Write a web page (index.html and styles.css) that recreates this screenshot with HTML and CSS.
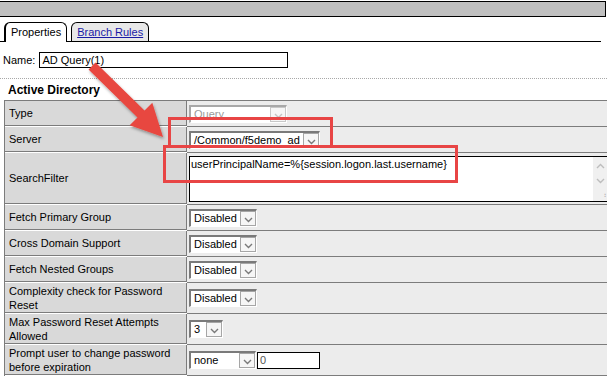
FILE: index.html
```html
<!DOCTYPE html>
<html>
<head>
  <title>AD Query Properties</title>
  <link rel="stylesheet" href="styles.css">
</head>
<body>
  <div class="topbar"></div>

  <div class="tabs">
    <div class="tab active">Properties</div>
    <div class="tab"><a href="#">Branch Rules</a></div>
  </div>

  <div class="name-row">
    <label>Name:</label>
    <div class="textbox name-box">AD Query(1)</div>
  </div>

  <div class="sep"></div>
  <h3 class="section">Active Directory</h3>

  <div class="props">
    <div class="lbl">Type</div>
    <div class="val">
      <span class="sel disabled w-query"><span class="sel-text">Query</span><span class="sel-btn"><svg width="9" height="6" viewBox="0 0 9 6"><path d="M1 1l3.5 3.5L8 1" fill="none" stroke="currentColor" stroke-width="1.4"/></svg></span></span>
    </div>

    <div class="lbl">Server</div>
    <div class="val">
      <span class="sel w-server"><span class="sel-text">/Common/f5demo_ad</span><span class="sel-btn"><svg width="9" height="6" viewBox="0 0 9 6"><path d="M1 1l3.5 3.5L8 1" fill="none" stroke="currentColor" stroke-width="1.4"/></svg></span></span>
    </div>

    <div class="lbl tall">SearchFilter</div>
    <div class="val tall top">
      <div class="area">
        <span class="area-text">userPrincipalName=%{session.logon.last.username}</span>
        <div class="scroll">
          <svg width="9" height="6" viewBox="0 0 9 6"><path d="M1 5l3.5-3.5L8 5" fill="none" stroke="currentColor" stroke-width="1.4"/></svg>
          <svg width="9" height="6" viewBox="0 0 9 6"><path d="M1 1l3.5 3.5L8 1" fill="none" stroke="currentColor" stroke-width="1.4"/></svg>
          <span class="grip">⠰</span>
        </div>
      </div>
    </div>

    <div class="lbl">Fetch Primary Group</div>
    <div class="val">
      <span class="sel w-dis"><span class="sel-text">Disabled</span><span class="sel-btn"><svg width="9" height="6" viewBox="0 0 9 6"><path d="M1 1l3.5 3.5L8 1" fill="none" stroke="currentColor" stroke-width="1.4"/></svg></span></span>
    </div>

    <div class="lbl">Cross Domain Support</div>
    <div class="val">
      <span class="sel w-dis"><span class="sel-text">Disabled</span><span class="sel-btn"><svg width="9" height="6" viewBox="0 0 9 6"><path d="M1 1l3.5 3.5L8 1" fill="none" stroke="currentColor" stroke-width="1.4"/></svg></span></span>
    </div>

    <div class="lbl">Fetch Nested Groups</div>
    <div class="val">
      <span class="sel w-dis"><span class="sel-text">Disabled</span><span class="sel-btn"><svg width="9" height="6" viewBox="0 0 9 6"><path d="M1 1l3.5 3.5L8 1" fill="none" stroke="currentColor" stroke-width="1.4"/></svg></span></span>
    </div>

    <div class="lbl two">Complexity check for Password<br>Reset</div>
    <div class="val two">
      <span class="sel w-dis"><span class="sel-text">Disabled</span><span class="sel-btn"><svg width="9" height="6" viewBox="0 0 9 6"><path d="M1 1l3.5 3.5L8 1" fill="none" stroke="currentColor" stroke-width="1.4"/></svg></span></span>
    </div>

    <div class="lbl two">Max Password Reset Attempts<br>Allowed</div>
    <div class="val two">
      <span class="sel w-num"><span class="sel-text">3</span><span class="sel-btn"><svg width="9" height="6" viewBox="0 0 9 6"><path d="M1 1l3.5 3.5L8 1" fill="none" stroke="currentColor" stroke-width="1.4"/></svg></span></span>
    </div>

    <div class="lbl two">Prompt user to change password<br>before expiration</div>
    <div class="val two">
      <span class="sel w-none"><span class="sel-text">none</span><span class="sel-btn"><svg width="9" height="6" viewBox="0 0 9 6"><path d="M1 1l3.5 3.5L8 1" fill="none" stroke="currentColor" stroke-width="1.4"/></svg></span></span>
      <span class="textbox days">0</span>
    </div>
  </div>

  <!-- annotations drawn over the screenshot -->
  <div class="callout server-box"></div>
  <div class="callout filter-box"></div>
  <svg class="arrow" width="180" height="150" viewBox="0 0 180 150">
    <defs>
      <filter id="shadow" x="-20%" y="-20%" width="140%" height="140%">
        <feDropShadow dx="1" dy="2" stdDeviation="1.5" flood-color="#000" flood-opacity="0.35"/>
      </filter>
    </defs>
    <polygon filter="url(#shadow)" fill="#e8473f"
      points="95.5,62.5 144.5,110.5 152.3,102.7 163,137 129.7,125.3 137.5,117.5 88.5,69.5"/>
  </svg>
</body>
</html>
```

FILE: styles.css
```css
body {
  margin: 0;
  width: 607px;
  height: 386px;
  overflow: hidden;
  position: relative;
  background: #fff;
  color: #000;
  font-family: 'Liberation Sans', Arial, sans-serif;
  font-size: 11px;
}

.topbar {
  margin-top: 1px;
  width: 606px;
  height: 16px;
  box-sizing: border-box;
  background: #c0c0c0;
  border: 1px solid #000;
  border-left: none;
}

.tabs {
  display: flex;
  gap: 4px;
  margin-top: 5px;
  padding-left: 4px;
  width: 597px;
  border-bottom: 1px solid #000;
}
.tab {
  height: 18px;
  line-height: 19px;
  padding: 0 5px;
  margin-bottom: -1px;
  border: 1px solid #000;
  border-bottom: none;
  border-radius: 6px 6px 0 0;
  background: #e8e8e8;
  font-size: 11px;
}
.tab.active {
  background: #fff;
  height: 19px;
  border-left-width: 2px;
}
.tab a { color: #1a1aa6; }

.name-row {
  display: flex;
  align-items: center;
  padding: 10px 3px 0;
  font-size: 11px;
}
.textbox {
  box-sizing: border-box;
  border: 1px solid #000;
  background: #fff;
  padding-left: 2px;
}
.name-box {
  margin-left: 4px;
  width: 249px;
  height: 16px;
  line-height: 14px;
}

.sep {
  margin-top: 10px;
  border-top: 1px dotted #a8a8a8;
}
.section {
  margin: 0;
  padding: 4px 8px 2px;
  font-size: 12px;
  line-height: 15px;
}

.props {
  display: grid;
  grid-template-columns: 182px 1fr;
  margin-left: 4px;
  width: 615px;
  border-top: 1px solid #7c7c7c;
  border-left: 1px solid #7c7c7c;
}
.lbl, .val {
  height: 25px;
  border-bottom: 1px solid #7c7c7c;
  display: flex;
  align-items: center;
}
.lbl {
  box-sizing: border-box;
  padding-left: 4px;
  background: #d9d9d9;
  border-right: 1px solid #7c7c7c;
  line-height: 14px;
}
.val {
  padding-left: 2px;
  background: #ececec;
  gap: 1px;
}
.tall { height: 51px; }
.two { height: 30px; }
.val.top { align-items: flex-start; }

.sel {
  display: inline-flex;
  box-sizing: border-box;
  height: 18px;
  background: #fff;
  border-style: solid;
  border-width: 2px 1px 1px 2px;
  border-color: #7a7a7a #fff #fff #7a7a7a;
}
.sel-text {
  flex: 1;
  padding-left: 3px;
  line-height: 15px;
  white-space: nowrap;
  overflow: hidden;
}
.sel-btn {
  width: 16px;
  flex: none;
  box-sizing: border-box;
  border: 1px solid #a6a6a6;
  background: #f6f6f6;
  color: #7a7a7a;
  display: flex;
  align-items: flex-end;
  justify-content: center;
  padding-bottom: 2px;
}
.sel.disabled {
  border-color: #a8a8a8 #fff #fff #a8a8a8;
}
.sel.disabled .sel-text { color: #9a9a9a; }
.sel.disabled .sel-btn { color: #c4c4c4; border-color: #c8c8c8; }

.w-query { width: 98px; }
.w-server { width: 131px; }
.w-dis { width: 68px; }
.w-num { width: 34px; }
.w-none { width: 67px; }

.days {
  width: 63px;
  height: 17px;
  line-height: 15px;
  color: #555;
}

.area {
  display: flex;
  margin-top: 3px;
  width: 430px;
  height: 46px;
  box-sizing: border-box;
  background: #fff;
  border: 1px solid #000;
  border-right: none;
}
.area-text {
  width: 402px;
  padding-left: 1px;
  line-height: 15px;
}
.scroll {
  width: 14px;
  background: #f0f0f0;
  color: #bdbdbd;
  display: flex;
  flex-direction: column;
  align-items: center;
  gap: 9px;
  padding-top: 6px;
}
.grip {
  font-size: 8px;
  line-height: 6px;
  margin-left: 7px;
}

.callout {
  position: absolute;
  border: 3px solid #e84545;
  box-sizing: border-box;
}
.server-box {
  left: 168px;
  top: 117px;
  width: 165px;
  height: 31px;
}
.filter-box {
  left: 163px;
  top: 145px;
  width: 295px;
  height: 38px;
}
.arrow {
  position: absolute;
  left: 0;
  top: 0;
}
```
